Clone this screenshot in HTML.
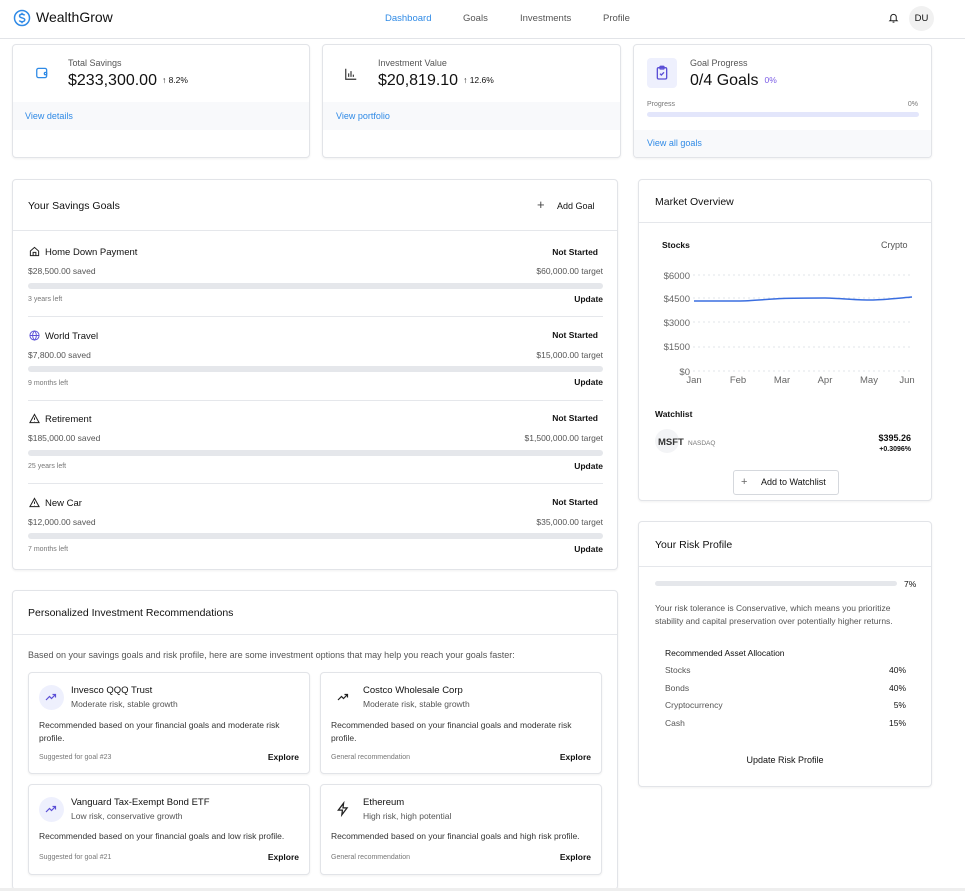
<!DOCTYPE html>
<html style="width:965px;height:891px;overflow:hidden"><head><meta charset="utf-8"><style>
*{margin:0;padding:0;box-sizing:border-box}
body{width:965px;height:891px;background:#fff;font-family:"Liberation Sans",sans-serif;color:#111;position:relative;overflow:hidden;font-size:9px}
.a{position:absolute;white-space:nowrap}
.card{position:absolute;border:1px solid #e2e4e8;border-radius:4px;background:#fff;box-shadow:0 1px 2px rgba(0,0,0,.06)}
.g{color:#555}.lg{color:#777}.b{font-weight:bold}.blue{color:#2f8ae6}
.bar{position:absolute;height:6px;border-radius:3px;background:#e5e7eb}
.r{text-align:right}
.pct{font-size:8.5px;margin-left:5px;vertical-align:2px}
</style></head><body>
<svg class="a" style="left:13px;top:9px" width="18" height="18" viewBox="0 0 24 24" fill="none" stroke="#2f8ae6" stroke-width="2"><circle cx="12" cy="12" r="10"/><path d="M15.5 8.5c-.6-1-1.9-1.5-3.5-1.5-2 0-3.3 1-3.3 2.4 0 3.3 7 1.7 7 5 0 1.5-1.5 2.6-3.7 2.6-1.6 0-3-.6-3.6-1.6M12 5v2M12 17v2"/></svg>
<div class="a" style="left:36px;top:9px;font-size:14px;color:#111">WealthGrow</div>
<div class="a blue" style="left:385px;top:13px;font-size:9.5px">Dashboard</div>
<div class="a g" style="left:463px;top:13px;font-size:9.5px">Goals</div>
<div class="a g" style="left:520px;top:13px;font-size:9.5px">Investments</div>
<div class="a g" style="left:603px;top:13px;font-size:9.5px">Profile</div>
<svg class="a" style="left:888px;top:12px" width="11" height="12" viewBox="0 0 24 24" fill="none" stroke="#222" stroke-width="2.2"><path d="M6 16V10a6 6 0 0 1 12 0v6l2 2H4z"/><path d="M10 21h4"/></svg>
<div class="a" style="left:909px;top:6px;width:25px;height:25px;border-radius:50%;background:#f1f1f1;font-size:9.5px;text-align:center;line-height:25px">DU</div>
<div class="a" style="left:0;top:38px;width:965px;height:1px;background:#e2e4e8"></div>

<div class="card" style="left:12px;top:44px;width:298px;height:114px;overflow:hidden">
 <div class="a" style="left:0;top:57px;width:298px;height:28px;background:#f8f9fb"></div>
 <svg class="a" style="left:22px;top:21px" width="14" height="14" viewBox="0 0 24 24" fill="none" stroke="#2f8ae6" stroke-width="2.2"><rect x="3" y="4" width="17" height="16" rx="3"/><circle cx="18" cy="13" r="2"/></svg>
 <div class="a g" style="left:55px;top:13px;font-size:9px">Total Savings</div>
 <div class="a" style="left:55px;top:27px;font-size:16px">$233,300.00<span class="pct">↑ 8.2%</span></div>
 <div class="a blue" style="left:12px;top:66px;font-size:9px">View details</div>
</div>
<div class="card" style="left:322px;top:44px;width:299px;height:114px;overflow:hidden">
 <div class="a" style="left:0;top:57px;width:299px;height:28px;background:#f8f9fb"></div>
 <svg class="a" style="left:21px;top:22px" width="14" height="14" viewBox="0 0 24 24" fill="none" stroke="#333" stroke-width="2"><path d="M3 3v18h18M8 17v-6M12 17V7M16 17v-4"/></svg>
 <div class="a g" style="left:55px;top:13px;font-size:9px">Investment Value</div>
 <div class="a" style="left:55px;top:27px;font-size:16px">$20,819.10<span class="pct">↑ 12.6%</span></div>
 <div class="a blue" style="left:13px;top:66px;font-size:9px">View portfolio</div>
</div>
<div class="card" style="left:633px;top:44px;width:299px;height:114px;overflow:hidden">
 <div class="a" style="left:0;top:85px;width:299px;height:29px;background:#f8f9fb"></div>
 <div class="a" style="left:13px;top:13px;width:30px;height:30px;border-radius:4px;background:#eef0fd"></div>
 <svg class="a" style="left:21px;top:20px" width="14" height="16" viewBox="0 0 20 24" fill="none" stroke="#5b4fd6" stroke-width="2"><rect x="3" y="4" width="14" height="17" rx="2"/><rect x="7" y="2" width="6" height="4" rx="1"/><path d="M7 13l2 2 4-4"/></svg>
 <div class="a g" style="left:56px;top:13px;font-size:9px">Goal Progress</div>
 <div class="a" style="left:56px;top:27px;font-size:16px">0/4 Goals<span class="pct" style="color:#7b5ce6;margin-left:6px">0%</span></div>
 <div class="a lg" style="left:13px;top:56px;font-size:7px">Progress</div>
 <div class="a lg" style="right:13px;top:56px;font-size:7px">0%</div>
 <div class="bar" style="left:13px;top:67px;width:272px;height:5px;background:#e3e6fb"></div>
 <div class="a blue" style="left:13px;top:93px;font-size:9px">View all goals</div>
</div>

<div class="card" style="left:12px;top:179px;width:606px;height:391px">
 <div class="a" style="left:15px;top:20px;font-size:10.5px">Your Savings Goals</div>
 <div class="a" style="left:524px;top:17px;font-size:13px;color:#444">+</div>
 <div class="a" style="left:544px;top:21px;font-size:9px">Add Goal</div>
 <div class="a" style="left:0;top:50px;width:604px;height:1px;background:#e5e7eb"></div>
</div>

<div class="card" style="left:12px;top:590px;width:606px;height:300px">
 <div class="a" style="left:15px;top:16px;font-size:10.5px">Personalized Investment Recommendations</div>
 <div class="a" style="left:0;top:43px;width:604px;height:1px;background:#e5e7eb"></div>
 <div class="a g" style="left:15px;top:59px;font-size:9px">Based on your savings goals and risk profile, here are some investment options that may help you reach your goals faster:</div>
</div>

<div class="card" style="left:638px;top:179px;width:294px;height:322px">
 <div class="a" style="left:16px;top:16px;font-size:10.5px">Market Overview</div>
 <div class="a" style="left:0;top:42px;width:292px;height:1px;background:#e5e7eb"></div>
 <div class="a b" style="left:23px;top:60px;font-size:8.5px">Stocks</div>
 <div class="a g" style="left:242px;top:60px;font-size:9px">Crypto</div>
 <div class="a b" style="left:16px;top:229px;font-size:8.5px">Watchlist</div>
 <div class="a" style="left:16px;top:249px;width:24px;height:24px;border-radius:50%;background:#f3f4f6"></div>
 <div class="a b" style="left:19px;top:257px;font-size:9.5px;color:#333">MSFT</div>
 <div class="a lg" style="left:49px;top:260px;font-size:6.5px">NASDAQ</div>
 <div class="a b r" style="right:20px;top:253px;font-size:9px">$395.26</div>
 <div class="a b r" style="right:20px;top:266px;font-size:7px">+0.3096%</div>
 <div class="a" style="left:94px;top:290px;width:106px;height:25px;border:1px solid #d5d8dd;border-radius:3px;font-size:9px;line-height:23px;padding-left:27px">Add to Watchlist</div>
 <div class="a" style="left:102px;top:296px;font-size:11px;color:#666">+</div>
</div>
<svg class="a" style="left:655px;top:265px" width="265" height="125" font-family="Liberation Sans" font-size="9.5" fill="#666">
 <g stroke="#e2e4e8" stroke-dasharray="2 3"><line x1="38" x2="255" y1="10" y2="10"/><line x1="38" x2="255" y1="33" y2="33"/><line x1="38" x2="255" y1="57" y2="57"/><line x1="38" x2="255" y1="82" y2="82"/><line x1="38" x2="255" y1="106" y2="106"/></g>
 <text x="35" y="14" text-anchor="end">$6000</text><text x="35" y="37" text-anchor="end">$4500</text><text x="35" y="61" text-anchor="end">$3000</text><text x="35" y="85" text-anchor="end">$1500</text><text x="35" y="110" text-anchor="end">$0</text>
 <text x="39" y="118" text-anchor="middle">Jan</text><text x="83" y="118" text-anchor="middle">Feb</text><text x="127" y="118" text-anchor="middle">Mar</text><text x="170" y="118" text-anchor="middle">Apr</text><text x="214" y="118" text-anchor="middle">May</text><text x="252" y="118" text-anchor="middle">Jun</text>
 <path d="M39 36 C60 36,70 36,83 36 S115 34,127 33.5 S160 33,170 33 S200 35,214 35 S245 33,257 32" fill="none" stroke="#3a6ee0" stroke-width="1.5"/>
</svg>

<div class="card" style="left:638px;top:521px;width:294px;height:266px">
 <div class="a" style="left:16px;top:17px;font-size:10.5px">Your Risk Profile</div>
 <div class="a" style="left:0;top:44px;width:292px;height:1px;background:#e5e7eb"></div>
 <div class="bar" style="left:16px;top:59px;width:242px;height:5px"></div>
 <div class="a" style="left:265px;top:57px;font-size:8.5px">7%</div>
 <div class="a g" style="left:16px;top:80px;font-size:8.5px;line-height:13px">Your risk tolerance is Conservative, which means you prioritize<br>stability and capital preservation over potentially higher returns.</div>
 <div class="a" style="left:26px;top:126px;font-size:8.5px;color:#111">Recommended Asset Allocation</div>
 <div class="a g" style="left:26px;top:143px;font-size:8.5px">Stocks</div><div class="a r" style="right:25px;top:143px;font-size:8.5px">40%</div>
 <div class="a g" style="left:26px;top:161px;font-size:8.5px">Bonds</div><div class="a r" style="right:25px;top:161px;font-size:8.5px">40%</div>
 <div class="a g" style="left:26px;top:178px;font-size:8.5px">Cryptocurrency</div><div class="a r" style="right:25px;top:178px;font-size:8.5px">5%</div>
 <div class="a g" style="left:26px;top:196px;font-size:8.5px">Cash</div><div class="a r" style="right:25px;top:196px;font-size:8.5px">15%</div>
 <div class="a" style="left:0;width:292px;text-align:center;top:233px;font-size:9px">Update Risk Profile</div>
</div>

<svg class="a" style="left:29px;top:246px" width="11" height="11" viewBox="0 0 24 24" fill="none" stroke="#222" stroke-width="2.2"><path d="M3 11L12 3l9 8v10H3z"/><path d="M9 21v-7h6v7"/></svg>
<div class="a" style="left:45px;top:247px;font-size:9.5px">Home Down Payment</div>
<div class="a b r" style="right:367px;top:247px;font-size:8.5px">Not Started</div>
<div class="a g" style="left:28px;top:266px;font-size:8.5px">$28,500.00 saved</div>
<div class="a g r" style="right:362px;top:266px;font-size:8.5px">$60,000.00 target</div>
<div class="bar" style="left:28px;top:283px;width:575px"></div>
<div class="a lg" style="left:28px;top:296px;font-size:7px">3 years left</div>
<div class="a b r" style="right:362px;top:294px;font-size:8.5px">Update</div>
<div class="a" style="left:28px;top:316px;width:575px;height:1px;background:#e5e7eb"></div>

<svg class="a" style="left:29px;top:330px" width="11" height="11" viewBox="0 0 24 24" fill="none" stroke="#5b4fd6" stroke-width="2"><circle cx="12" cy="12" r="10"/><path d="M2 12h20M12 2c3 3 4 7 4 10s-1 7-4 10c-3-3-4-7-4-10s1-7 4-10"/></svg>
<div class="a" style="left:45px;top:331px;font-size:9.5px">World Travel</div>
<div class="a b r" style="right:367px;top:330px;font-size:8.5px">Not Started</div>
<div class="a g" style="left:28px;top:350px;font-size:8.5px">$7,800.00 saved</div>
<div class="a g r" style="right:362px;top:350px;font-size:8.5px">$15,000.00 target</div>
<div class="bar" style="left:28px;top:366px;width:575px"></div>
<div class="a lg" style="left:28px;top:380px;font-size:7px">9 months left</div>
<div class="a b r" style="right:362px;top:377px;font-size:8.5px">Update</div>
<div class="a" style="left:28px;top:400px;width:575px;height:1px;background:#e5e7eb"></div>

<svg class="a" style="left:29px;top:413px" width="11" height="11" viewBox="0 0 24 24" fill="none" stroke="#222" stroke-width="2.2"><path d="M12 3L2 21h20z"/><path d="M12 10v5M12 18v.5"/></svg>
<div class="a" style="left:45px;top:414px;font-size:9.5px">Retirement</div>
<div class="a b r" style="right:367px;top:413px;font-size:8.5px">Not Started</div>
<div class="a g" style="left:28px;top:433px;font-size:8.5px">$185,000.00 saved</div>
<div class="a g r" style="right:362px;top:433px;font-size:8.5px">$1,500,000.00 target</div>
<div class="bar" style="left:28px;top:450px;width:575px"></div>
<div class="a lg" style="left:28px;top:463px;font-size:7px">25 years left</div>
<div class="a b r" style="right:362px;top:461px;font-size:8.5px">Update</div>
<div class="a" style="left:28px;top:483px;width:575px;height:1px;background:#e5e7eb"></div>

<svg class="a" style="left:29px;top:497px" width="11" height="11" viewBox="0 0 24 24" fill="none" stroke="#222" stroke-width="2.2"><path d="M12 3L2 21h20z"/><path d="M12 10v5M12 18v.5"/></svg>
<div class="a" style="left:45px;top:498px;font-size:9.5px">New Car</div>
<div class="a b r" style="right:367px;top:497px;font-size:8.5px">Not Started</div>
<div class="a g" style="left:28px;top:517px;font-size:8.5px">$12,000.00 saved</div>
<div class="a g r" style="right:362px;top:517px;font-size:8.5px">$35,000.00 target</div>
<div class="bar" style="left:28px;top:533px;width:575px"></div>
<div class="a lg" style="left:28px;top:546px;font-size:7px">7 months left</div>
<div class="a b r" style="right:362px;top:544px;font-size:8.5px">Update</div>

<div class="card" style="left:28px;top:672px;width:282px;height:102px">
 <div class="a" style="left:10px;top:12px;width:25px;height:25px;border-radius:50%;background:#eef0fd"></div>
 <svg class="a" style="left:15px;top:18px" width="14" height="12" viewBox="0 0 24 24" fill="none" stroke="#5b4fd6" stroke-width="2.4"><path d="M2 18l7-7 4 4 8-8M15 7h6v6"/></svg>
 <div class="a" style="left:42px;top:12px;font-size:9.5px">Invesco QQQ Trust</div>
 <div class="a g" style="left:42px;top:26px;font-size:8.5px">Moderate risk, stable growth</div>
 <div class="a" style="left:10px;top:46px;font-size:8.5px;color:#333;line-height:13px;white-space:normal;width:262px">Recommended based on your financial goals and moderate risk profile.</div>
 <div class="a lg" style="left:10px;top:81px;font-size:7px">Suggested for goal #23</div>
 <div class="a b r" style="right:10px;top:79px;font-size:8.5px">Explore</div>
</div>
<div class="card" style="left:320px;top:672px;width:282px;height:102px">
 <svg class="a" style="left:15px;top:18px" width="14" height="12" viewBox="0 0 24 24" fill="none" stroke="#222" stroke-width="2.4"><path d="M2 18l7-7 4 4 8-8M15 7h6v6"/></svg>
 <div class="a" style="left:42px;top:12px;font-size:9.5px">Costco Wholesale Corp</div>
 <div class="a g" style="left:42px;top:26px;font-size:8.5px">Moderate risk, stable growth</div>
 <div class="a" style="left:10px;top:46px;font-size:8.5px;color:#333;line-height:13px;white-space:normal;width:262px">Recommended based on your financial goals and moderate risk profile.</div>
 <div class="a lg" style="left:10px;top:81px;font-size:7px">General recommendation</div>
 <div class="a b r" style="right:10px;top:79px;font-size:8.5px">Explore</div>
</div>
<div class="card" style="left:28px;top:784px;width:282px;height:91px">
 <div class="a" style="left:10px;top:12px;width:25px;height:25px;border-radius:50%;background:#eef0fd"></div>
 <svg class="a" style="left:15px;top:18px" width="14" height="12" viewBox="0 0 24 24" fill="none" stroke="#5b4fd6" stroke-width="2.4"><path d="M2 18l7-7 4 4 8-8M15 7h6v6"/></svg>
 <div class="a" style="left:42px;top:12px;font-size:9.5px">Vanguard Tax-Exempt Bond ETF</div>
 <div class="a g" style="left:42px;top:26px;font-size:8.5px">Low risk, conservative growth</div>
 <div class="a" style="left:10px;top:46px;font-size:8.5px;color:#333">Recommended based on your financial goals and low risk profile.</div>
 <div class="a lg" style="left:10px;top:69px;font-size:7px">Suggested for goal #21</div>
 <div class="a b r" style="right:10px;top:67px;font-size:8.5px">Explore</div>
</div>
<div class="card" style="left:320px;top:784px;width:282px;height:91px">
 <svg class="a" style="left:15px;top:16px" width="14" height="16" viewBox="0 0 24 24" fill="none" stroke="#222" stroke-width="2.2"><path d="M13 2L4 14h7l-1 8 9-12h-7z"/></svg>
 <div class="a" style="left:42px;top:12px;font-size:9.5px">Ethereum</div>
 <div class="a g" style="left:42px;top:26px;font-size:8.5px">High risk, high potential</div>
 <div class="a" style="left:10px;top:46px;font-size:8.5px;color:#333">Recommended based on your financial goals and high risk profile.</div>
 <div class="a lg" style="left:10px;top:69px;font-size:7px">General recommendation</div>
 <div class="a b r" style="right:10px;top:67px;font-size:8.5px">Explore</div>
</div>
<div class="a" style="left:0;top:888px;width:965px;height:3px;background:#eee"></div>
</body></html>
